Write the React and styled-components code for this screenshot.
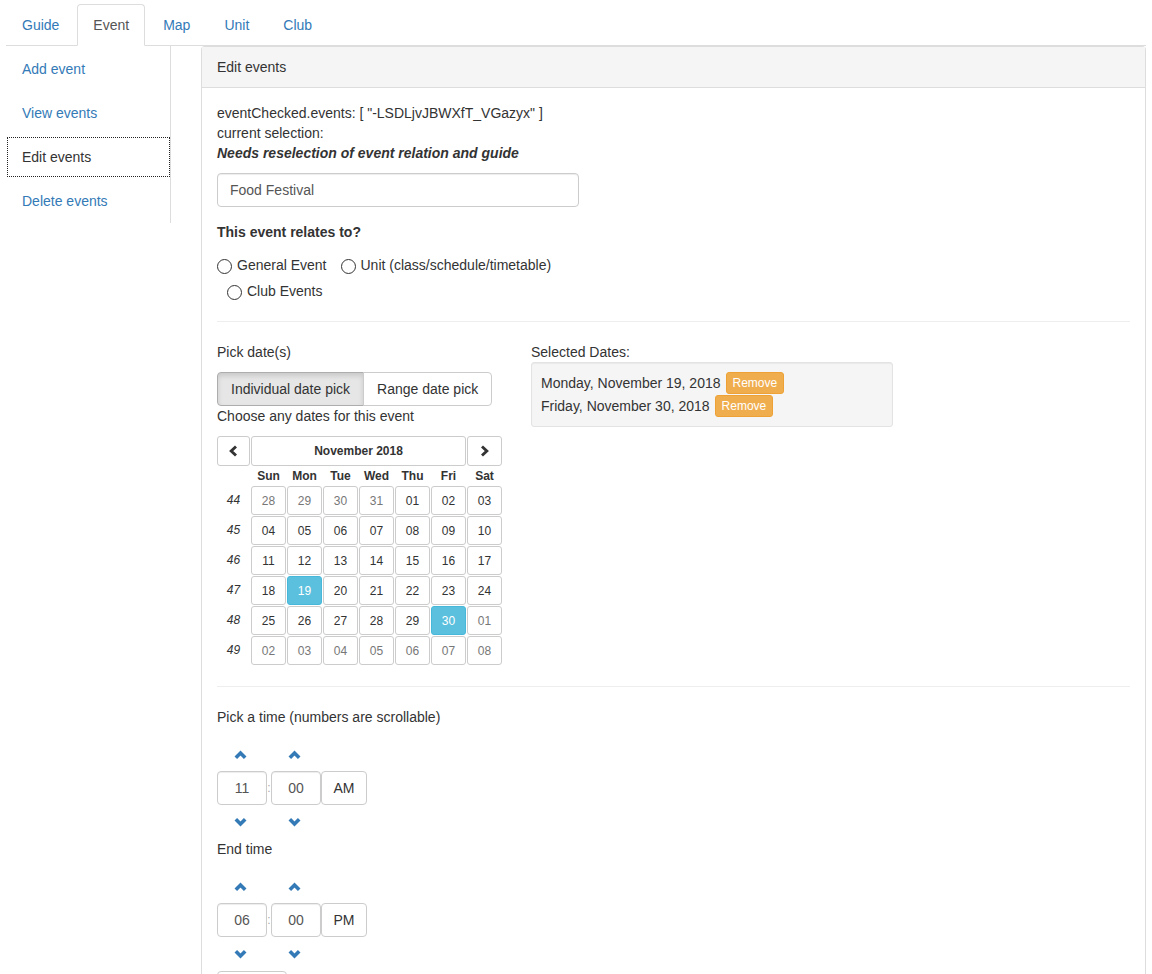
import styled, { createGlobalStyle } from "styled-components";

const tabs = ["Guide", "Event", "Map", "Unit", "Club"];
const sideLinks = ["Add event", "View events", "Edit events", "Delete events"];
const dayNames = ["Sun", "Mon", "Tue", "Wed", "Thu", "Fri", "Sat"];

// November 2018 grid, starting on Sunday Oct 28
function buildWeeks() {
  const weeks = [];
  for (let w = 0; w < 6; w++) {
    const days = [];
    for (let d = 0; d < 7; d++) {
      const date = new Date(2018, 9, 28 + w * 7 + d);
      const inMonth = date.getMonth() === 10;
      days.push({
        label: String(date.getDate()).padStart(2, "0"),
        muted: !inMonth,
        selected: inMonth && (date.getDate() === 19 || date.getDate() === 30),
      });
    }
    weeks.push({ number: 44 + w, days });
  }
  return weeks;
}

const weeks = buildWeeks();

function Chevron({ dir, stroke = 3.6, color = "currentColor" }) {
  const points = {
    up: "1.8,8.8 6.5,4 11.2,8.8",
    down: "1.8,2.2 6.5,7 11.2,2.2",
    left: "8,1.5 3.2,6 8,10.5",
    right: "3,1.5 7.8,6 3,10.5",
  }[dir];
  const vertical = dir === "up" || dir === "down";
  return (
    <svg
      width={vertical ? 13 : 11}
      height={vertical ? 11 : 12}
      viewBox={vertical ? "0 0 13 11" : "0 0 11 12"}
    >
      <polyline points={points} fill="none" stroke={color} strokeWidth={stroke} />
    </svg>
  );
}

function TimePicker({ hours, minutes, meridian }) {
  return (
    <TimeGrid>
      <ArrowCell>
        <Chevron dir="up" />
      </ArrowCell>
      <span />
      <ArrowCell>
        <Chevron dir="up" />
      </ArrowCell>
      <span />
      <TimeInput defaultValue={hours} />
      <Colon>:</Colon>
      <TimeInput defaultValue={minutes} />
      <MeridianButton>{meridian}</MeridianButton>
      <ArrowCell>
        <Chevron dir="down" />
      </ArrowCell>
      <span />
      <ArrowCell>
        <Chevron dir="down" />
      </ArrowCell>
      <span />
    </TimeGrid>
  );
}

function App() {
  return (
    <Page>
      <GlobalStyle />
      <TabBar>
        {tabs.map((t) => (
          <Tab key={t} $active={t === "Event"}>
            {t}
          </Tab>
        ))}
      </TabBar>
      <Main>
        <SideNav>
          {sideLinks.map((l) => (
            <SideLink key={l} $active={l === "Edit events"}>
              {l}
            </SideLink>
          ))}
        </SideNav>
        <Panel>
          <PanelHeading>Edit events</PanelHeading>
          <PanelBody>
            <div>eventChecked.events: [ "-LSDLjvJBWXfT_VGazyx" ]</div>
            <div>current selection:</div>
            <Notice>Needs reselection of event relation and guide</Notice>
            <TextInput defaultValue="Food Festival" />
            <GroupLabel>This event relates to?</GroupLabel>
            <RadioRow>
              <RadioOption>
                <Radio type="radio" name="rel" />
                General Event
              </RadioOption>
              <RadioOption>
                <Radio type="radio" name="rel" />
                Unit (class/schedule/timetable)
              </RadioOption>
            </RadioRow>
            <RadioRow $indent>
              <RadioOption>
                <Radio type="radio" name="rel" />
                Club Events
              </RadioOption>
            </RadioRow>
            <Divider $top={17} />
            <DateSection>
              <LeftCol>
                <div>Pick date(s)</div>
                <BtnGroup>
                  <ToggleButton $active>Individual date pick</ToggleButton>
                  <ToggleButton>Range date pick</ToggleButton>
                </BtnGroup>
                <div>Choose any dates for this event</div>
                <Calendar>
                  <CalButton $h={30}>
                    <Chevron dir="left" color="#333" stroke={2.9} />
                  </CalButton>
                  <CalTitle $h={30}>November 2018</CalTitle>
                  <CalButton $h={30}>
                    <Chevron dir="right" color="#333" stroke={2.9} />
                  </CalButton>
                  <span />
                  {dayNames.map((d) => (
                    <DayName key={d}>{d}</DayName>
                  ))}
                  {weeks.map((w) => [
                    <WeekNum key={"w" + w.number}>{w.number}</WeekNum>,
                    ...w.days.map((d, i) => (
                      <CalButton
                        key={w.number + "-" + i}
                        $h={29}
                        $muted={d.muted}
                        $selected={d.selected}
                      >
                        {d.label}
                      </CalButton>
                    )),
                  ])}
                </Calendar>
              </LeftCol>
              <div>
                <div>Selected Dates:</div>
                <Well>
                  <DateRow>
                    Monday, November 19, 2018
                    <RemoveButton>Remove</RemoveButton>
                  </DateRow>
                  <DateRow>
                    Friday, November 30, 2018
                    <RemoveButton>Remove</RemoveButton>
                  </DateRow>
                </Well>
              </div>
            </DateSection>
            <Divider $top={20} />
            <TimeLabel>Pick a time (numbers are scrollable)</TimeLabel>
            <TimePicker hours="11" minutes="00" meridian="AM" />
            <TimeLabel>End time</TimeLabel>
            <TimePicker hours="06" minutes="00" meridian="PM" />
            <SubmitButton aria-label="Submit" />
          </PanelBody>
        </Panel>
      </Main>
    </Page>
  );
}

const GlobalStyle = createGlobalStyle`
  * { box-sizing: border-box; }
  body {
    margin: 0;
    background: #fff;
    font-family: "Liberation Sans", Arial, sans-serif;
    font-size: 14px;
    line-height: 20px;
    color: #333;
  }
`;

const Page = styled.div`
  padding: 4px 6px 0;
  height: 974px;
  overflow: hidden;
`;

const TabBar = styled.div`
  display: flex;
  border-bottom: 1px solid #ddd;
`;

const Tab = styled.a`
  display: block;
  padding: 10px 15px;
  margin-right: 2px;
  margin-bottom: -1px;
  line-height: 20px;
  border: 1px solid transparent;
  border-radius: 4px 4px 0 0;
  color: ${(p) => (p.$active ? "#555" : "#337ab7")};
  background: ${(p) => (p.$active ? "#fff" : "transparent")};
  border-color: ${(p) => (p.$active ? "#ddd #ddd transparent" : "transparent")};
  cursor: pointer;
`;

const Main = styled.div`
  display: flex;
  align-items: flex-start;
`;

const SideNav = styled.div`
  width: 165px;
  flex-shrink: 0;
  border-right: 1px solid #ddd;
  padding: 3px 0 2px 1px;
  display: flex;
  flex-direction: column;
  gap: 4px;
`;

const SideLink = styled.a`
  display: block;
  padding: 9px 14px;
  line-height: 20px;
  border: 1px ${(p) => (p.$active ? "dotted #222" : "solid transparent")};
  color: ${(p) => (p.$active ? "#333" : "#337ab7")};
  cursor: pointer;
`;

const Panel = styled.div`
  flex: 1;
  margin-left: 30px;
  border: 1px solid #ddd;
  border-bottom: none;
  border-radius: 4px 4px 0 0;
`;

const PanelHeading = styled.div`
  padding: 10px 15px;
  background: #f5f5f5;
  border-bottom: 1px solid #ddd;
`;

const PanelBody = styled.div`
  padding: 15px;
`;

const Notice = styled.div`
  font-weight: bold;
  font-style: italic;
`;

const TextInput = styled.input`
  display: block;
  margin-top: 10px;
  width: 362px;
  height: 34px;
  padding: 6px 12px;
  font: inherit;
  color: #555;
  border: 1px solid #ccc;
  border-radius: 4px;
  box-shadow: inset 0 1px 1px rgba(0, 0, 0, 0.075);
`;

const GroupLabel = styled.div`
  margin-top: 15px;
  font-weight: bold;
`;

const RadioRow = styled.div`
  display: flex;
  align-items: center;
  height: 26px;
  margin-top: ${(p) => (p.$indent ? "0" : "10px")};
  padding-left: ${(p) => (p.$indent ? "10px" : "0")};
`;

const RadioOption = styled.label`
  display: inline-flex;
  align-items: center;
  gap: 5px;

  & + & {
    margin-left: 14px;
  }
`;

const Radio = styled.input`
  appearance: none;
  width: 15px;
  height: 15px;
  margin: 3px 0 0;
  border: 1px solid #333;
  border-radius: 50%;
  background: #fff;
`;

const Divider = styled.hr`
  border: 0;
  border-top: 1px solid #eee;
  margin: ${(p) => p.$top}px 0 20px;
`;

const DateSection = styled.div`
  display: flex;
`;

const LeftCol = styled.div`
  width: 314px;
`;

const BtnGroup = styled.div`
  display: flex;
  margin: 10px 0 0;
`;

const ToggleButton = styled.button`
  height: 34px;
  padding: 6px 13px;
  font: inherit;
  color: #333;
  border: 1px solid ${(p) => (p.$active ? "#adadad" : "#ccc")};
  background: ${(p) => (p.$active ? "#e6e6e6" : "#fff")};
  box-shadow: ${(p) => (p.$active ? "inset 0 3px 5px rgba(0,0,0,.125)" : "none")};
  border-radius: 4px 0 0 4px;

  & + & {
    margin-left: -1px;
    border-radius: 0 4px 4px 0;
  }
`;

const Calendar = styled.div`
  display: grid;
  grid-template-columns: 33px repeat(7, 35px);
  grid-template-rows: 30px 20px repeat(6, 30px);
  column-gap: 1px;
  margin-top: 10px;
`;

const CalButton = styled.button`
  height: ${(p) => p.$h}px;
  padding: 0;
  display: flex;
  align-items: center;
  justify-content: center;
  font-family: inherit;
  font-size: 12px;
  line-height: 18px;
  border-radius: 3px;
  border: 1px solid ${(p) => (p.$selected ? "#46b8da" : "#ccc")};
  background: ${(p) => (p.$selected ? "#5bc0de" : "#fff")};
  color: ${(p) => (p.$selected ? "#fff" : p.$muted ? "#777" : "#333")};
`;

const CalTitle = styled(CalButton)`
  grid-column: span 6;
  font-weight: bold;
  color: #333;
`;

const DayName = styled.div`
  padding-top: 1px;
  text-align: center;
  font-size: 12px;
  font-weight: bold;
  line-height: 19px;
`;

const WeekNum = styled.div`
  text-align: center;
  font-size: 12px;
  font-style: italic;
  line-height: 29px;
`;

const Well = styled.div`
  width: 362px;
  padding: 9px;
  background: #f5f5f5;
  border: 1px solid #e3e3e3;
  border-radius: 3px;
  box-shadow: inset 0 1px 1px rgba(0, 0, 0, 0.05);
`;

const DateRow = styled.div`
  display: flex;
  align-items: center;
  gap: 5px;
  height: 22px;

  & + & {
    margin-top: 1px;
  }
`;

const RemoveButton = styled.button`
  padding: 1px 6px;
  font-family: inherit;
  font-size: 12px;
  line-height: 18px;
  color: #fff;
  background: #f0ad4e;
  border: 1px solid #eea236;
  border-radius: 3px;
`;

const TimeLabel = styled.div`
  margin-bottom: 10px;
`;

const TimeGrid = styled.div`
  display: grid;
  grid-template-columns: 50px 4px 50px 46px;
  grid-template-rows: repeat(3, 34px);
`;

const ArrowCell = styled.a`
  display: flex;
  align-items: center;
  justify-content: center;
  color: #337ab7;
  padding-right: 3px;
`;

const TimeInput = styled.input`
  width: 50px;
  height: 34px;
  padding: 6px 4px;
  text-align: center;
  font: inherit;
  color: #555;
  border: 1px solid #ccc;
  border-radius: 4px;
  box-shadow: inset 0 1px 1px rgba(0, 0, 0, 0.075);
`;

const Colon = styled.span`
  display: flex;
  align-items: center;
  justify-content: center;
  color: #aaa;
  font-size: 12px;
`;

const MeridianButton = styled.button`
  height: 34px;
  padding: 6px 10px;
  font: inherit;
  color: #333;
  background: #fff;
  border: 1px solid #ccc;
  border-radius: 4px;
`;

const SubmitButton = styled.button`
  display: block;
  width: 70px;
  height: 34px;
  background: #fff;
  border: 1px solid #ccc;
  border-radius: 4px;
`;

export default App;
